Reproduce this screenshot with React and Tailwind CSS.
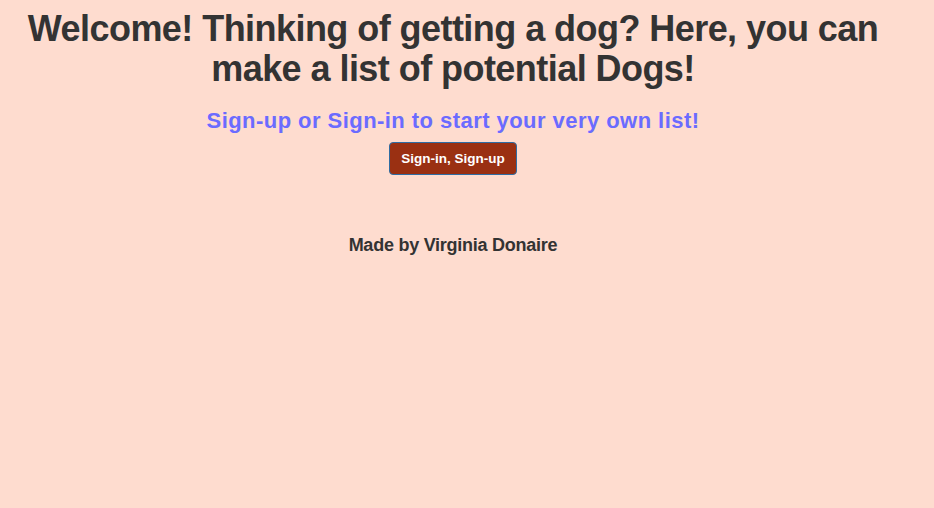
import React from 'react';

const App = () => {
  return (
    <div className="min-h-screen bg-[#fedccf] text-[#333333] font-['Liberation_Sans',Arial,sans-serif]">
      <div className="w-[906px] flex flex-col items-center text-center">
        <h1 className="mt-[9px] text-[36px] leading-[1.1] font-bold tracking-[-0.55px] px-[15px]">
          Welcome! Thinking of getting a dog? Here, you can make a list of potential Dogs!
        </h1>
        <h3 className="mt-[21px] text-[22px] leading-[1.1] font-bold tracking-[0.45px] text-[#6b6bff]">
          Sign-up or Sign-in to start your very own list!
        </h3>
        <button className="mt-[9px] h-[33px] w-[128px] bg-[#9a3012] border border-[#2e6da4] rounded-[4px] text-white text-[13.5px] font-bold">
          Sign-in, Sign-up
        </button>
        <p className="mt-[57px] text-[18px] font-bold tracking-[-0.25px]">Made by Virginia Donaire</p>
      </div>
    </div>
  );
};

export default App;
